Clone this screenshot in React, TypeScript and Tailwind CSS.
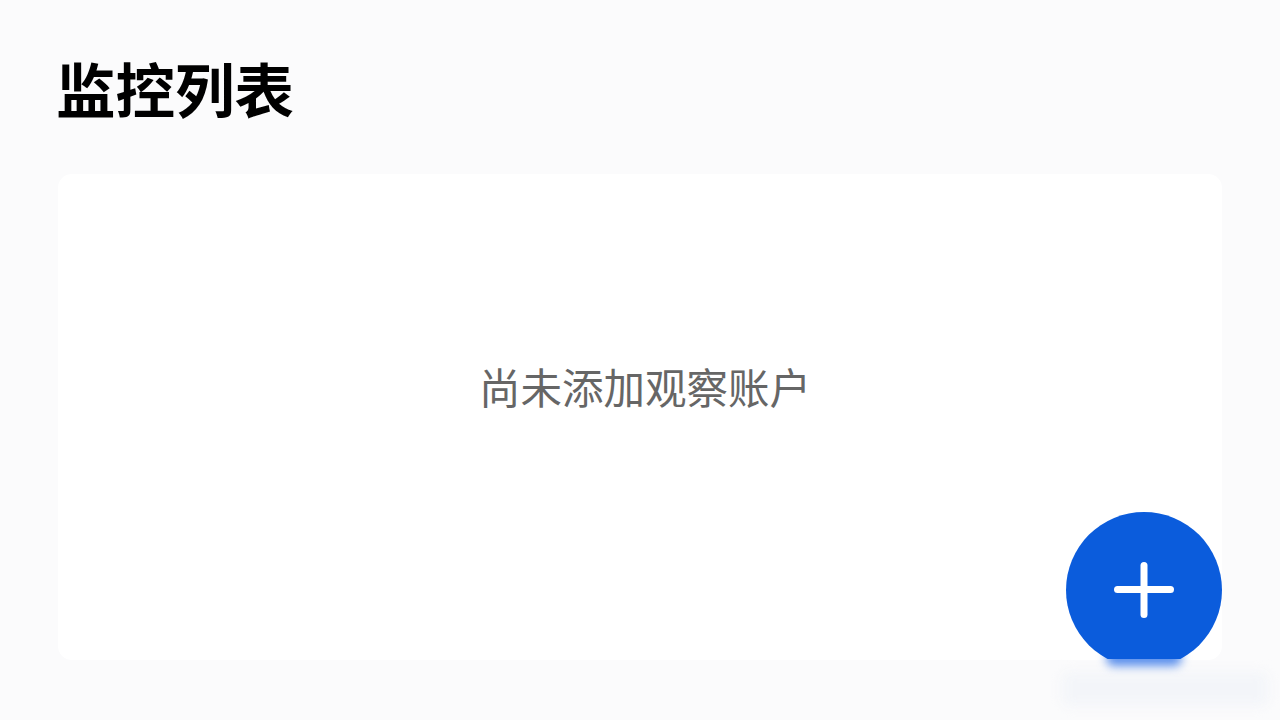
const font = { fontFamily: '"Noto Sans CJK SC", "Noto Sans", sans-serif' };

export default function App() {
  return (
    <div className="relative h-[720px] w-[1280px] overflow-hidden bg-[#fbfbfc] pt-[45px] pr-[58px] pl-[56px]" style={font}>
      <h1 className="h-[84px] text-[59.5px] leading-[84px] font-bold text-black">监控列表</h1>
      <div className="mt-[45px] ml-[2px] flex h-[486px] w-[1164px] items-center justify-center rounded-[14px] bg-white pb-[62px] pl-[10px]">
        <p className="text-[41.5px] leading-[56px] text-[#666666]">尚未添加观察账户</p>
      </div>

      {/* floating add button, bottom edge is cut off with a soft smear under it */}
      <div className="absolute top-[672px] left-[1062px] h-[34px] w-[206px] rounded-md bg-[#f3f5f9] blur-[6px]" />
      <div className="absolute top-[650px] left-[1106px] h-[16px] w-[76px] rounded-full bg-[#5a8fec] blur-[5px]" />
      <div className="absolute top-[512px] left-[1066px] h-[147px] w-[156px] overflow-hidden">
        <button className="flex h-[156px] w-[156px] items-center justify-center rounded-full bg-[#0b5cdc]">
          <svg width="60" height="56" viewBox="0 0 60 56" fill="none" stroke="white" strokeWidth="7" strokeLinecap="round">
            <path d="M30 3.5V52.5" />
            <path d="M3.5 27.5H56.5" />
          </svg>
        </button>
      </div>
    </div>
  );
}
